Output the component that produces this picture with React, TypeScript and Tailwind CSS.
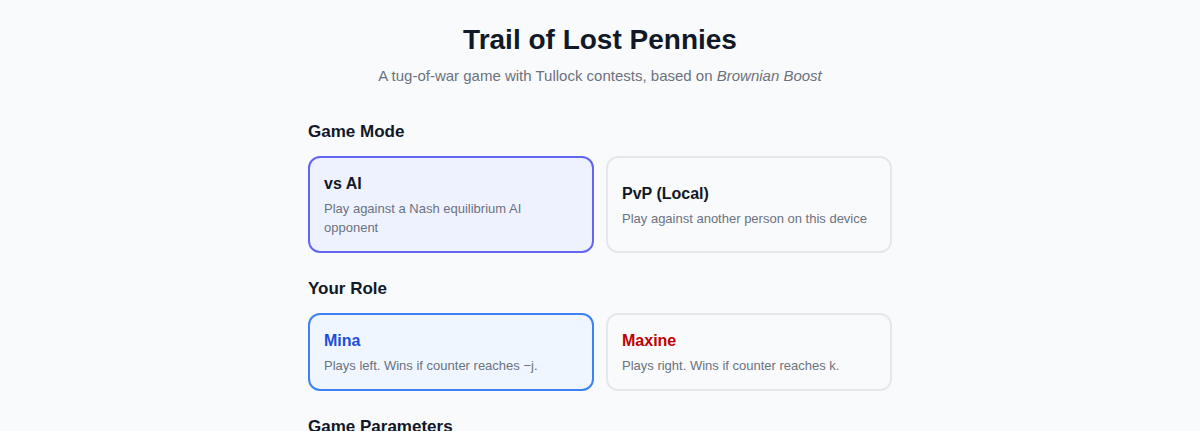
import { useState } from "react";

type Mode = "ai" | "pvp";
type Role = "mina" | "maxine";

const font = { fontFamily: '"Liberation Sans", Arial, sans-serif' };

function OptionCard({
    selected,
    activeClass,
    title,
    titleClass,
    desc,
    onClick,
}: {
    selected: boolean;
    activeClass: string;
    title: string;
    titleClass: string;
    desc: string;
    onClick: () => void;
}) {
    return (
        <button
            onClick={onClick}
            className={`flex flex-col justify-center text-left rounded-xl border-2 p-[14px] ${selected ? activeClass : "border-[#e5e7eb] bg-[#f9fafb]"}`}
        >
            <div className={`text-base font-bold leading-6 mb-[3px] ${titleClass}`}>{title}</div>
            <div className="text-[13px] leading-[19px] text-[#6b7280]">{desc}</div>
        </button>
    );
}

export default function App() {
    const [mode, setMode] = useState<Mode>("ai");
    const [role, setRole] = useState<Role>("mina");

    return (
        <div className="min-h-screen bg-[#f9fafb]" style={font}>
            <div className="max-w-[584px] mx-auto pt-[22px]">
                <h1 className="text-center text-[28px] leading-9 font-bold text-[#111827]">Trail of Lost Pennies</h1>
                <p className="text-center text-[15px] leading-6 mt-[6px] text-[#6b7280]">
                    A tug-of-war game with Tullock contests, based on <em>Brownian Boost</em>
                </p>

                <h2 className="text-[17px] leading-7 font-bold text-[#111827] mt-[30px] mb-[10px]">Game Mode</h2>
                <div className="grid grid-cols-2 gap-3">
                    <OptionCard
                        selected={mode === "ai"}
                        activeClass="border-[#6366f1] bg-[#eef2ff]"
                        title="vs AI"
                        titleClass="text-[#111827]"
                        desc="Play against a Nash equilibrium AI opponent"
                        onClick={() => setMode("ai")}
                    />
                    <OptionCard
                        selected={mode === "pvp"}
                        activeClass="border-[#6366f1] bg-[#eef2ff]"
                        title="PvP (Local)"
                        titleClass="text-[#111827]"
                        desc="Play against another person on this device"
                        onClick={() => setMode("pvp")}
                    />
                </div>

                <h2 className="text-[17px] leading-7 font-bold text-[#111827] mt-[22px] mb-[10px]">Your Role</h2>
                <div className="grid grid-cols-2 gap-3">
                    <OptionCard
                        selected={role === "mina"}
                        activeClass="border-[#3b82f6] bg-[#eff6ff]"
                        title="Mina"
                        titleClass="text-[#1d4ed8]"
                        desc="Plays left. Wins if counter reaches −j."
                        onClick={() => setRole("mina")}
                    />
                    <OptionCard
                        selected={role === "maxine"}
                        activeClass="border-[#ef4444] bg-[#fef2f2]"
                        title="Maxine"
                        titleClass="text-[#c00000]"
                        desc="Plays right. Wins if counter reaches k."
                        onClick={() => setRole("maxine")}
                    />
                </div>

                <h2 className="text-[17px] leading-7 font-bold text-[#111827] mt-[22px] mb-[10px]">Game Parameters</h2>
            </div>
        </div>
    );
}
